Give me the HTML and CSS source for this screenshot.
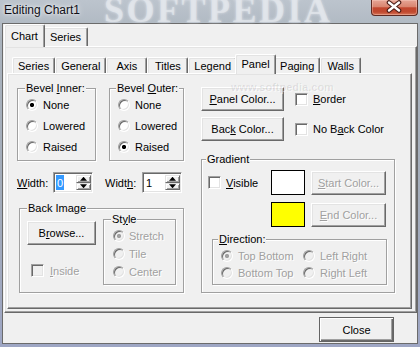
FILE: index.html
```html
<!DOCTYPE html>
<html>
<head>
<meta charset="utf-8">
<title>Editing Chart1</title>
<link rel="stylesheet" href="styles.css">
</head>
<body>
<div class="win">
  <div class="titlebar">
    <span class="title">Editing Chart1</span>
    <div class="close" aria-label="Close">
      <svg width="45" height="15" viewBox="0 0 45 15">
        <path d="M17 2.5 L27 10.5 M27 2.5 L17 10.5" stroke="#4a1c16" stroke-width="4.6" stroke-linecap="round"/>
        <path d="M17 2.5 L27 10.5 M27 2.5 L17 10.5" stroke="#ffffff" stroke-width="2.4" stroke-linecap="round"/>
      </svg>
    </div>
  </div>
  <span class="wm-title">SOFTPEDIA</span>
  <span class="wm-url">www.softpedia.com</span>

  <div class="client">
    <div class="tabs otabs">
      <div class="tab sel">Chart</div>
      <div class="tab">Series</div>
    </div>
    <div class="panel opanel">
      <div class="tabs itabs">
        <div class="tab">Series</div>
        <div class="tab">General</div>
        <div class="tab">Axis</div>
        <div class="tab">Titles</div>
        <div class="tab">Legend</div>
        <div class="tab sel">Panel</div>
        <div class="tab">Paging</div>
        <div class="tab">Walls</div>
      </div>
      <div class="panel ipanel">
        <div class="lcol">
          <div class="bevels">
            <fieldset class="grp bevel-in">
              <legend>Bevel <u>I</u>nner:</legend>
              <div class="radios">
                <div class="rrow"><span class="radio on"></span><span>None</span></div>
                <div class="rrow"><span class="radio"></span><span>Lowered</span></div>
                <div class="rrow"><span class="radio"></span><span>Raised</span></div>
              </div>
            </fieldset>
            <fieldset class="grp bevel-out">
              <legend>Bevel <u>O</u>uter:</legend>
              <div class="radios">
                <div class="rrow"><span class="radio"></span><span>None</span></div>
                <div class="rrow"><span class="radio"></span><span>Lowered</span></div>
                <div class="rrow"><span class="radio on"></span><span>Raised</span></div>
              </div>
            </fieldset>
          </div>
          <div class="wrow">
            <span class="wlbl"><u>W</u>idth:</span>
            <div class="spin-edit">
              <span class="val selected">0</span>
              <div class="spin"><span class="sb"><i class="tri up"></i></span><span class="sb"><i class="tri dn"></i></span></div>
            </div>
            <span class="wlbl wlbl2">Widt<u>h</u>:</span>
            <div class="spin-edit">
              <span class="val">1</span>
              <div class="spin"><span class="sb"><i class="tri up"></i></span><span class="sb"><i class="tri dn"></i></span></div>
            </div>
          </div>
          <fieldset class="grp backimg">
            <legend>Back Image</legend>
            <div class="bi-body">
              <div class="bi-left">
                <div class="btn browse"><span>B<u>r</u>owse...</span></div>
                <div class="crow inside"><span class="chk off"></span><span class="dis"><u>I</u>nside</span></div>
              </div>
              <fieldset class="grp style">
                <legend>St<u>y</u>le</legend>
                <div class="sradios">
                  <div class="srow"><span class="radio on off"></span><span class="dis">Stretch</span></div>
                  <div class="srow"><span class="radio off"></span><span class="dis">Tile</span></div>
                  <div class="srow"><span class="radio off"></span><span class="dis">Center</span></div>
                </div>
              </fieldset>
            </div>
          </fieldset>
        </div>
        <div class="rcol">
          <div class="brow">
            <div class="btn cbtn"><span><u>P</u>anel Color...</span></div>
            <div class="crow"><span class="chk"></span><span><u>B</u>order</span></div>
          </div>
          <div class="brow brow2">
            <div class="btn cbtn"><span>Bac<u>k</u> Color...</span></div>
            <div class="crow"><span class="chk"></span><span>No B<u>a</u>ck Color</span></div>
          </div>
          <fieldset class="grp grad">
            <legend>Gradient</legend>
            <div class="gtop">
              <div class="crow vis"><span class="chk"></span><span><u>V</u>isible</span></div>
              <div class="swatch white"></div>
              <div class="btn gbtn"><span class="dis"><u>S</u>tart Color...</span></div>
              <div></div>
              <div class="swatch yellow"></div>
              <div class="btn gbtn"><span class="dis"><u>E</u>nd Color...</span></div>
            </div>
            <fieldset class="grp dir">
              <legend><u>D</u>irection:</legend>
              <div class="dgrid">
                <div class="drow"><span class="radio on off"></span><span class="dis">Top Bottom</span></div>
                <div class="drow"><span class="radio off"></span><span class="dis">Left Right</span></div>
                <div class="drow"><span class="radio off"></span><span class="dis">Bottom Top</span></div>
                <div class="drow"><span class="radio off"></span><span class="dis">Right Left</span></div>
              </div>
            </fieldset>
          </fieldset>
        </div>
      </div>
    </div>
    <div class="footer">
      <div class="btn default"><span>Close</span></div>
    </div>
  </div>
</div>
</body>
</html>
```

FILE: styles.css
```css
* { box-sizing: border-box; }

body {
  margin: 0;
  font-family: "Liberation Sans", Arial, sans-serif;
  font-size: 11px;
  color: #000;
}

u { text-decoration: underline; text-underline-offset: 1px; }

.win {
  position: relative;
  width: 420px;
  height: 347px;
  overflow: hidden;
  padding: 0 2px 3px 2px;
  display: flex;
  flex-direction: column;
  background: linear-gradient(to bottom, #bcc4cd 0, #aab3bd 40px, #a3acba 200px, #9ea6c4 347px);
}

.titlebar {
  height: 23px;
  display: flex;
  align-items: flex-start;
  padding-left: 2px;
}

.title {
  position: relative;
  z-index: 2;
  font-size: 12px;
  line-height: 20px;
  color: #101018;
  text-shadow: 0 0 6px rgba(255,255,255,.9), 0 0 3px rgba(255,255,255,.8);
}

.close {
  position: relative;
  z-index: 2;
  margin-left: auto;
  width: 47px;
  height: 16px;
  border: 1px solid #5e2a22;
  border-top: 0;
  border-radius: 0 0 4px 4px;
  background: linear-gradient(to bottom, #e6a596 0, #d98570 45%, #c2462e 52%, #c04a30 80%, #d8785c 100%);
  box-shadow: inset 0 0 0 1px rgba(255,220,210,.35);
}
.close svg { display: block; }

.wm-title {
  position: absolute;
  left: 104px;
  top: -11px;
  font-family: "Liberation Serif", serif;
  font-weight: bold;
  font-size: 36px;
  letter-spacing: 2.5px;
  color: rgba(228,232,237,.7);
  text-shadow: 0 0 3px rgba(228,232,237,.9);
  z-index: 1;
}

.wm-url {
  position: absolute;
  left: 231px;
  top: 81px;
  font-size: 11px;
  font-weight: bold;
  color: rgba(0,0,0,.09);
  text-shadow: 1px 1px 0 rgba(255,255,255,.5);
  z-index: 3;
}

.client {
  width: 416px;
  height: 321px;
  border: 1px solid #6b6b6b;
  background: #f0f0f0;
  display: flex;
  flex-direction: column;
}

/* ---------- tabs ---------- */
.tabs {
  display: flex;
  align-items: flex-end;
}
.tab {
  display: flex;
  align-items: center;
  justify-content: center;
  background: #f0f0f0;
  border-top: 1px solid #fff;
  border-left: 1px solid #fff;
  border-right: 1px solid #696969;
  border-radius: 2px 2px 0 0;
  box-shadow: inset -1px 0 0 #a0a0a0, inset 1px 1px 0 #e3e3e3;
  white-space: nowrap;
}
.tab.sel {
  position: relative;
  z-index: 2;
  margin: 0 -2px -1px -2px;
}

.otabs { height: 22px; padding-left: 3px; }
.otabs .tab { height: 19px; padding: 0 6px; }
.otabs .tab.sel { height: 23px; }

.itabs { height: 19px; padding-left: 5px; }
.itabs .tab { height: 16px; padding: 0 5px; min-width: 41px; }
.itabs .tab.sel { height: 20px; padding-bottom: 2px; }

/* ---------- panels ---------- */
.panel {
  background: #f0f0f0;
  border-top: 1px solid #fff;
  border-left: 1px solid #fff;
  border-right: 1px solid #696969;
  border-bottom: 1px solid #696969;
  box-shadow: inset -1px -1px 0 #a0a0a0, inset 1px 1px 0 #e3e3e3;
}

.opanel {
  margin-left: 1px;
  width: 413px;
  height: 267px;
  padding: 7px 4px 3px 2px;
  display: flex;
  flex-direction: column;
}

.ipanel {
  width: 405px;
  height: 236px;
  display: flex;
  align-items: flex-start;
}

.lcol { margin: 8px 0 0 9px; width: 167px; }
.rcol { margin: 13px 0 0 17px; width: 194px; }

/* ---------- group boxes ---------- */
.grp {
  margin: 0;
  padding: 0;
  min-width: 0;
  border: 1px solid #a0a0a0;
  box-shadow: inset 1px 1px 0 #fff, 1px 1px 0 #fff;
}
.grp > legend {
  padding: 0 1px;
  margin-left: 7px;
  height: 13px;
  line-height: 13px;
  background: #f0f0f0;
}

.bevels { display: flex; gap: 13px; }
.bevel-in { width: 79px; height: 79px; }
.bevel-out { width: 75px; height: 79px; }
.bevel-out > legend { margin-left: 6px; }

.radios { margin-top: -1px; padding-left: 8px; }
.rrow { height: 21px; display: flex; align-items: center; gap: 5px; }

.radio {
  flex: none;
  width: 12px;
  height: 12px;
  border-radius: 50%;
  background: #fff;
  border: 1px solid;
  border-color: #a0a0a0 #fff #fff #a0a0a0;
  box-shadow: inset 1px 1px 0 #696969, inset -1px -1px 0 #e3e3e3;
}
.radio.on { background: radial-gradient(circle at 50% 50%, #000 0, #000 1.8px, #fff 2.4px); }
.radio.off { background: #f0f0f0; }
.radio.on.off { background: radial-gradient(circle at 50% 50%, #a0a0a0 0, #a0a0a0 1.8px, #f0f0f0 2.4px); }

.chk {
  flex: none;
  width: 13px;
  height: 13px;
  background: #fff;
  border: 1px solid;
  border-color: #a0a0a0 #fff #fff #a0a0a0;
  box-shadow: inset 1px 1px 0 #696969, inset -1px -1px 0 #e3e3e3;
}
.chk.off { background: #f0f0f0; }

.dis { color: #a0a0a0; text-shadow: 1px 1px 0 #fff; }

/* ---------- width row ---------- */
.wrow {
  margin-top: 11px;
  height: 21px;
  display: flex;
  align-items: center;
}
.wlbl { width: 36px; }
.wlbl2 { width: 37px; margin-left: 12px; }

.spin-edit {
  width: 40px;
  height: 21px;
  background: #fff;
  border: 1px solid;
  border-color: #a0a0a0 #fff #fff #a0a0a0;
  box-shadow: inset 1px 1px 0 #696969, inset -1px -1px 0 #e3e3e3;
  padding: 2px 1px 2px 2px;
  display: flex;
}
.val { line-height: 16px; padding-left: 1px; }
.val.selected {
  background: #3399ff;
  color: #fff;
  padding: 0 1px;
}
.spin {
  margin-left: auto;
  width: 15px;
  display: flex;
  flex-direction: column;
}
.sb {
  flex: 1;
  display: flex;
  align-items: center;
  justify-content: center;
  background: #f0f0f0;
  border: 1px solid;
  border-color: #e3e3e3 #696969 #696969 #e3e3e3;
  box-shadow: inset 1px 1px 0 #fff, inset -1px -1px 0 #a0a0a0;
}
.tri {
  display: block;
  width: 7px;
  height: 4px;
  background: #000;
}
.tri.up { clip-path: polygon(50% 0, 100% 100%, 0 100%); }
.tri.dn { clip-path: polygon(0 0, 100% 0, 50% 100%); }

/* ---------- buttons ---------- */
.btn {
  display: flex;
  align-items: center;
  justify-content: center;
  background: #f0f0f0;
  border: 1px solid;
  border-color: #fff #696969 #696969 #fff;
  box-shadow: inset -1px -1px 0 #a0a0a0, inset 1px 1px 0 #e3e3e3;
  white-space: nowrap;
}
.btn.default {
  border: 1px solid #646464;
  box-shadow: inset 1px 1px 0 #fff, inset -1px -1px 0 #696969, inset -2px -2px 0 #a0a0a0;
}

/* ---------- back image ---------- */
.backimg {
  margin: 9px 0 0 2px;
  width: 165px;
  height: 91px;
}
.bi-body { display: flex; padding-left: 7px; }
.bi-left { width: 69px; }
.browse { width: 69px; height: 24px; margin-top: 6px; }
.crow { display: flex; align-items: center; gap: 5px; }
.inside { margin-top: 19px; padding-left: 4px; gap: 6px; height: 13px; }

.style {
  margin: -2px 0 0 7px;
  width: 73px;
  height: 72px;
}
.sradios { padding: 1px 0 0 9px; }
.srow { height: 18px; display: flex; align-items: center; gap: 4px; }

/* ---------- right column ---------- */
.brow { display: flex; align-items: center; height: 24px; }
.brow2 { margin-top: 6px; }
.cbtn { width: 83px; height: 24px; margin-right: 11px; }

.grad {
  margin-top: 12px;
  width: 194px;
  height: 140px;
}
.grad > legend { margin-left: 4px; }

.gtop {
  display: grid;
  grid-template-columns: 63px 34px 75px;
  grid-template-rows: 25px 25px;
  row-gap: 7px;
  padding: 4px 0 0 6px;
}
.vis { align-self: center; }
.swatch { width: 34px; height: 25px; border: 1px solid #000; }
.swatch.white { background: #fff; }
.swatch.yellow { background: #ffff00; }
.gbtn { margin-left: 6px; width: 75px; height: 24px; align-self: end; }

.dir {
  margin: 6px 0 0 10px;
  width: 175px;
  height: 52px;
}
.dir > legend { margin-left: 5px; }
.dgrid {
  display: grid;
  grid-template-columns: 82px 82px;
  padding: 1px 0 0 8px;
}
.drow { height: 17px; display: flex; align-items: center; gap: 5px; }

/* ---------- footer ---------- */
.footer {
  display: flex;
  justify-content: flex-end;
  padding: 4px 23px 0 0;
}
.footer .btn { width: 75px; height: 25px; }
```
